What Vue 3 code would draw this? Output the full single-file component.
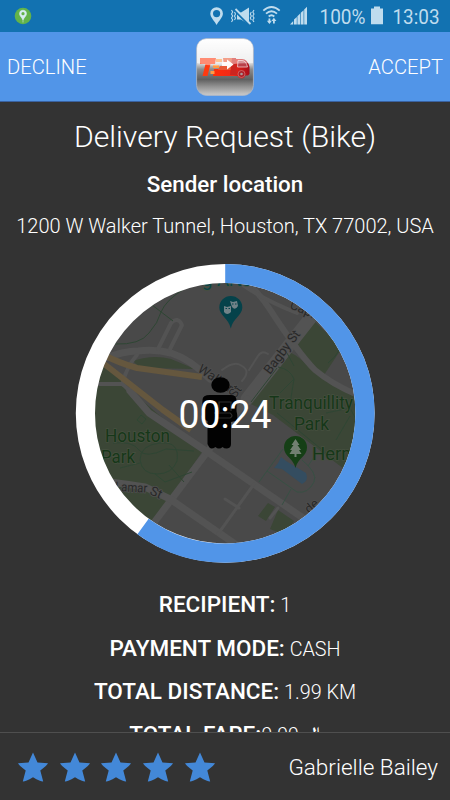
<script setup>
const details = [
  { label: 'RECIPIENT:', value: ' 1' },
  { label: 'PAYMENT MODE:', value: ' CASH' },
  { label: 'TOTAL DISTANCE:', value: ' 1.99 KM' },
  { label: 'TOTAL FARE:', value: '0.00 ', currency: '﷼' }
]
const bars = [0, 1, 2, 3, 4]
</script>

<template>
  <div class="screen">
    <div class="status">
      <svg class="gps" viewBox="0 0 18 18">
        <circle cx="9" cy="9" r="8.3" fill="#62b34a" />
        <path d="M9 15.5V11M9 3.2a3.5 3.5 0 0 0-3.5 3.5c0 2.1 2.3 3.7 3.5 6.2 1.2-2.5 3.5-4.1 3.5-6.2A3.5 3.5 0 0 0 9 3.2z" fill="#d7ecf2" stroke="#d7ecf2" stroke-width=".6" />
        <circle cx="9" cy="6.7" r="1.6" fill="#62b34a" />
      </svg>
      <svg class="tray" viewBox="208 0 242 32">
        <g fill="#bfdcee">
          <path fill-rule="evenodd" d="M216.600 7.200a6.300 6.300 0 0 0-6.300 6.300c0 4 4.300 7.500 6.300 11.500 2-4 6.300-7.500 6.300-11.500a6.300 6.300 0 0 0-6.300-6.300zM216.600 10a3.600 3.600 0 1 1 0 7.200 3.600 3.600 0 0 1 0-7.200z" />
          <path d="M237 12.500h4l8-5v17l-8-5h-4z" />
          <path d="M371 8.500h3V6.600h6v1.900h3v15.700h-12z" />
          <path d="M290 24.500l3.200-3.500v3.500z" />
          <path v-for="i in bars.slice(1)" :key="i" :d="`M${290.600 + i * 3.400} 24.500v-${1.500 + i * 3.400}l2.800-2.600V24.500z`" />
        </g>
        <path d="M234.500 10.500l15 15" stroke="#1272b1" stroke-width="2" />
        <path d="M235.500 9l15 15" stroke="#bfdcee" stroke-width="1.800" />
        <g fill="none" stroke="#bfdcee" stroke-width="1.100">
          <path d="M231.500 10l1.200 2-1.200 2 1.200 2-1.200 2 1.200 2-1.200 2M234.500 12l1 2-1 2 1 2-1 2M254 10l-1.200 2 1.200 2-1.200 2 1.200 2-1.200 2 1.200 2M251.300 12l-1 2 1 2-1 2 1 2" />
        </g>
        <g fill="none" stroke="#bfdcee" stroke-width="1.800">
          <path d="M263.300 10.700q8.200-7.500 16.400 0M266 13.700q5.500-5 11 0M268.700 16.500q2.800-2.500 5.600 0" />
          <path d="M269.400 18.500v4M273.900 19.500v4" />
        </g>
        <path d="M266.900 20.800h5l-2.500 3.200zM271.400 21h5l-2.500-3.200z" fill="#bfdcee" />
        <g class="tray-text">
          <text x="319.500" y="23.500" textLength="46" lengthAdjust="spacingAndGlyphs">100%</text>
          <text x="392.500" y="23.500" textLength="47" lengthAdjust="spacingAndGlyphs">13:03</text>
        </g>
      </svg>
    </div>

    <header class="bar">
      <button class="action">DECLINE</button>
      <svg class="logo" viewBox="0 0 58 58">
        <defs>
          <linearGradient id="chrome" x2="0" y2="1">
            <stop offset="0" stop-color="#fff" />
            <stop offset=".42" stop-color="#e4e4e4" />
            <stop offset=".54" stop-color="#8c8c8c" />
            <stop offset=".72" stop-color="#606060" />
            <stop offset=".86" stop-color="#999" />
            <stop offset="1" stop-color="#ccc" />
          </linearGradient>
          <linearGradient id="flame" x2="1" y2="0">
            <stop offset="0" stop-color="#ff2e09" />
            <stop offset=".55" stop-color="#ef2818" />
            <stop offset="1" stop-color="#a80c1a" />
          </linearGradient>
        </defs>
        <rect x=".6" y=".6" width="56.800" height="56.800" rx="10" fill="url(#chrome)" stroke="#aeb8c5" stroke-width=".8" />
        <path d="M4 20h16l-1 6h-4.500l-3 12H6.500l3-12H4z" fill="#ff3a10" />
        <path d="M18 31h16l6-10h6q5.500 0 7.500 8v7l-1.500 1.500h-2.500a4.300 4.300 0 0 1-8 .5H17z" fill="url(#flame)" />
        <path d="M27 20h12l-3 12H22l2-4h4z" fill="#e95a35" />
        <path d="M36 20h4l1 17h-7z" fill="#cc2520" />
        <path d="M20 21h6v3h-6zM17 27h6v3h-6zM14.500 33h4v3h-4zM26 25h4v3h-4z" fill="#ff9a44" />
        <path d="M26 24h5v-2.500l6.500 5-6.500 5V28h-5z" fill="#fffaf5" />
        <path d="M42 22.500h4q4 0 5.500 6.500h-10z" fill="#b9404a" stroke="#f0c8c8" stroke-width=".8" />
        <path d="M1 11Q1 1 11 1h36q10 0 10 10v14q-15 0-28 2t-28-2z" fill="#fff" fill-opacity=".42" />
        <circle cx="45.500" cy="36" r="3.500" fill="#ad2029" stroke="#d98c8c" stroke-width=".6" />
        <circle cx="45.500" cy="36" r="1.300" fill="#a99" />
      </svg>
      <button class="action">ACCEPT</button>
    </header>

    <main class="body">
      <h1>Delivery Request (Bike)</h1>
      <h2>Sender location</h2>
      <p class="address">1200 W Walker Tunnel, Houston, TX 77002, USA</p>

      <svg class="dial" viewBox="75 263 300 300">
        <defs><clipPath id="disc"><circle cx="225.200" cy="413.300" r="131" /></clipPath></defs>
        <g clip-path="url(#disc)">
          <rect x="75" y="263" width="300" height="300" fill="#494949" />
          <g fill="#3b4636">
            <path d="M90 383h33l14 13 65 56-50 72-70-50z" />
            <path d="M98 366l8-1 22 17-34 2zM133 361q20-7 38-2l24 10-55-1z" />
            <path d="M310 317l32 31-18 27q-15-10-27-32zM287 352l-38 51 24 12 75 57 20-30v-44q-40-14-60-32-14-14-21-14z" />
            <path d="M268 503l7 4-9 14-8-5zM278 510l16 11-9 14-15-6z" />
          </g>
          <g fill="none" stroke="#535353" stroke-linejoin="round" stroke-linecap="round">
            <path stroke-width="13" d="M312 316L247 399" />
            <path stroke-width="7" d="M247 399L153 524" />
            <path stroke-width="6" d="M246 281q14 13 25 30 28 43 44 59 18 15 45 26" />
            <path stroke-width="4" d="M243 285q23 16 54 28" />
            <path stroke-width="7" d="M103 359q20-8 35-8 18-2 33 2 19 6 39 26" />
            <path stroke-width="4" d="M158 349l13-26q7-7 11 2l-12 24M137 355q-10 11-14 27M97 384h25q4 2 11 12" />
            <path stroke-width="7" d="M130 391l19 22 54 36L303 518l50 34" />
            <path stroke-width="7" d="M110 482q16 2 35 5l25 12 65 45" />
            <path stroke-width="3" d="M254 484l-36 50M225 499l14 9M278 508l-8 10" />
            <path stroke-width="2" d="M249 370l9-14q4-6 10-2M222 370q13-10 20-4 9 5 0 15" />
          </g>
          <g fill="none" stroke="#65573e" stroke-width="6" stroke-linejoin="round">
            <path d="M104 355q15 8 33 13l65 9" />
            <path d="M103 363l60 47 28 20" />
          </g>
          <g fill="none" stroke="#2f4634" stroke-width="1">
            <path d="M115 344q25 1 34-11 9-10 12-21 5-12 23-23M152 305l21 16" />
            <path d="M141 415l5 4-4 5-5-4zM113 443q20-2 26 7t27-1l28 2M140 460q0-15 20-17t17 18q-5 13-20 13t-17-14M120 468l20-5M155 474l10 8 27-10M169 465l15 17" />
            <path d="M278 367q12 2 16 12l-4 25M294 379l-14 14M251 402l26-34M287 353l7 13M340 349q-5 9-12 14M326 413l24-5 8 15M336 440l14-24M277 413l54 44" />
            <path stroke="#385044" d="M283 449l-24 33M267 471l30 21q11 2 17-10 4-9-12-22M291 489l-9 16M308 466l8-12" />
          </g>
          <path d="M281 457l5 4 20 12q3 8-4 11l-20-15-8-1q5-5 7-11z" fill="#344d60" />
          <g class="map-label street">
            <text x="197" y="371" transform="rotate(34 197 371)">Walker</text>
            <text x="235" y="399" transform="rotate(-53 235 399)">St</text>
            <text x="270" y="375" transform="rotate(-53 270 375)">Bagby St</text>
            <text x="289" y="308" transform="rotate(23 289 308)">Capitol</text>
            <text x="115" y="491" textLength="32" lengthAdjust="spacingAndGlyphs" transform="rotate(3 115 491)">Lamar</text>
            <text x="149" y="494" transform="rotate(24 149 494)">St</text>
            <text x="309" y="514" transform="rotate(-40 309 514)">de</text>
          </g>
          <g class="map-label park">
            <text x="105" y="442" textLength="65" lengthAdjust="spacingAndGlyphs">Houston</text>
            <text x="101" y="463" textLength="34" lengthAdjust="spacingAndGlyphs">Park</text>
            <text x="269" y="409" textLength="84" lengthAdjust="spacingAndGlyphs">Tranquillity</text>
            <text x="294" y="430" textLength="35" lengthAdjust="spacingAndGlyphs">Park</text>
            <text x="312" y="460">Herm</text>
            <text class="teal" x="202" y="286">g Arts</text>
          </g>
          <path d="M230.800 296a11.500 11.500 0 0 0-11.500 11.500c0 8 9 10 11.500 21 2.500-11 11.500-13 11.500-21a11.500 11.500 0 0 0-11.500-11.500z" fill="#05424a" />
          <path fill="#718388" d="M230 301l3 1 4-1 1 5q-3 5-6 1zM224 306l3 1 4-1v6q-4 4-7 0z" />
          <path fill="#05424a" d="M225.500 308h1.500v1h-1.500zM228.500 308h1.500v1h-1.500zM232 303.500h1.500v1H232zM235 303.500h1.500v1H235z" />
          <path d="M295.500 436a11.500 11.500 0 0 0-11.500 11.500c0 9 9 10 11.500 20.500 2.500-10.500 11.500-11.500 11.500-20.500a11.500 11.500 0 0 0-11.500-11.500z" fill="#153f16" />
          <path d="M295.500 439l4 6h-2l3.500 5h-2l2.500 4h-5v3h-2v-3h-5l2.500-4h-2l3.500-5h-2z" fill="#718071" />
          <g fill="#020202">
            <ellipse cx="220.500" cy="385" rx="9.200" ry="7.800" />
            <path d="M210 395h21q5 0 5.500 5v11q2 8-1 10l-4.500 1v22q0 4-4 4.500-3 0-4.500-1.500-1.500 1.500-3.500 1.500t-3.500-1.500q-2 1.500-4 1.500t-4-4.500v-23q-6-2-6-7l1-14q0-5 7.500-5z" />
          </g>
          <path d="M219 412v-10h12v9M214 413h16q4 3 0 5h-15" fill="none" stroke="#2c2c2c" stroke-width="1.200" />
        </g>
        <circle class="ring" cx="225.200" cy="413.300" r="139.800" stroke="#fff" />
        <circle class="ring" cx="225.200" cy="413.300" r="139.800" stroke="#5195e8" pathLength="100" stroke-dasharray="60 40" transform="rotate(-90 225.200 413.300)" />
        <text class="timer" x="225" y="428" text-anchor="middle" textLength="93" lengthAdjust="spacingAndGlyphs">00:24</text>
      </svg>

      <div class="details">
        <p v-for="item in details" :key="item.label"><b>{{ item.label }}</b><span>{{ item.value }}</span><span v-if="item.currency" class="currency">{{ item.currency }}</span></p>
      </div>
    </main>

    <footer class="foot">
      <div class="stars">
        <svg v-for="n in 5" :key="n" viewBox="0 0 32 32">
          <path d="M16 1.500L20.500 11.400 31 12.300Q30.500 14 23.300 19.500L26.200 30.500Q24 30.800 16 26.200 8 30.800 5.800 30.500L8.700 19.500Q1.500 14 1 12.300L11.500 11.400z" fill="#4388d8" />
        </svg>
      </div>
      <span class="name">Gabrielle Bailey</span>
    </footer>
  </div>
</template>

<style>
body {
  background: #333;
  overflow: hidden;
}
</style>

<style scoped>
.screen {
  width: 450px;
  height: 800px;
  display: flex;
  flex-direction: column;
  background: #333;
  color: #fff;
  font-family: Roboto, sans-serif;
  font-weight: 300;
  overflow: hidden;
}
.status {
  height: 32px;
  flex: none;
  display: flex;
  justify-content: space-between;
  background: #1272b1;
}
.gps {
  width: 18px;
  height: 18px;
  margin: 7px 0 0 14px;
}
.tray {
  width: 242px;
  height: 32px;
}
.tray-text {
  fill: #bfdcee;
  font-size: 20.5px;
  font-weight: 400;
}
.bar {
  height: 70px;
  flex: none;
  box-sizing: border-box;
  padding: 0 7px;
  display: grid;
  grid-template-columns: 1fr 58px 1fr;
  align-items: center;
  background: #5195e8;
  border-bottom: 1px solid #3a62a0;
}
.action {
  border: 0;
  padding: 0;
  background: none;
  color: #fff;
  font: 300 20.2px/24px Roboto, sans-serif;
  text-align: left;
}
.action:last-child {
  text-align: right;
}
.logo {
  width: 58px;
  height: 58px;
}
.body {
  flex: 1;
  min-height: 0;
  overflow: hidden;
  display: flex;
  flex-direction: column;
  align-items: center;
}
h1 {
  margin: 15px 0 0;
  font-size: 30.2px;
  line-height: 40px;
  font-weight: 300;
  white-space: nowrap;
}
h2 {
  margin: 13px 0 0;
  font-size: 22.4px;
  line-height: 28px;
  font-weight: 500;
}
.address {
  margin: 15px 0 0;
  font-size: 20px;
  line-height: 26px;
  white-space: nowrap;
}
.dial {
  display: block;
  flex: none;
  width: 300px;
  height: 300px;
  margin-top: 24px;
}
.ring {
  fill: none;
  stroke-width: 19.2px;
}
.map-label {
  paint-order: stroke;
}
.street {
  font-size: 13px;
  font-weight: 400;
  fill: #282828;
  stroke: #505050;
  stroke-width: 1.5px;
}
.park {
  font-size: 18.5px;
  font-weight: 400;
  fill: #163719;
  stroke: #46503f;
  stroke-width: 1.5px;
}
.teal {
  fill: #0b4448;
}
.timer {
  font-size: 38px;
  font-weight: 400;
  fill: #fff;
}
.details {
  flex: none;
  margin-top: 20px;
}
.details p {
  margin: 0;
  height: 43.5px;
  line-height: 43.5px;
  font-size: 19.8px;
  text-align: center;
  white-space: pre;
}
.details p:last-child {
  line-height: 41.5px;
}
.details b {
  font-size: 22.5px;
  font-weight: 500;
}
.details .currency {
  display: inline-block;
  width: 17px;
  font-size: 23px;
  font-weight: 400;
  line-height: 1;
}
.foot {
  height: 68px;
  flex: none;
  box-sizing: border-box;
  border-top: 1px solid #4f4f4f;
  padding: 0 12px 0 17px;
  display: flex;
  align-items: center;
  justify-content: space-between;
}
.stars {
  display: flex;
  gap: 9.7px;
}
.stars svg {
  width: 32px;
  height: 32px;
}
.name {
  font-size: 22.5px;
  line-height: 28px;
}
</style>
